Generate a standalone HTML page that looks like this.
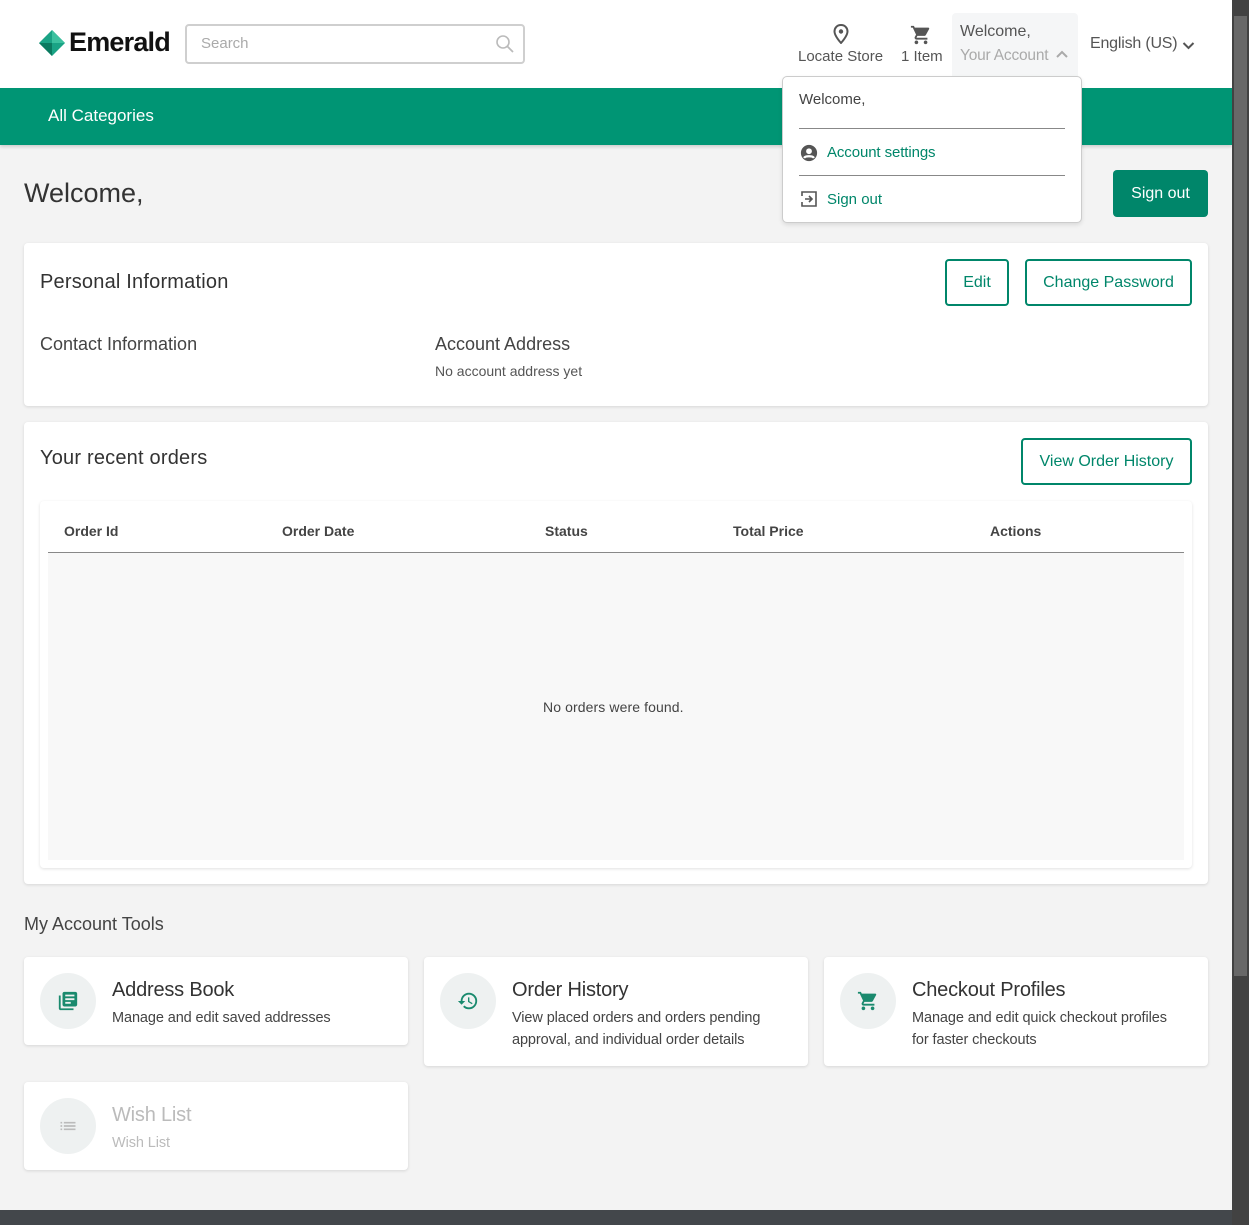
<!DOCTYPE html>
<html><head><style>
*{box-sizing:border-box;margin:0;padding:0}
body{width:1249px;height:1225px;overflow:hidden;background:#f3f3f3;font-family:"Liberation Sans",Arial,sans-serif;color:#333;position:relative}
.hdr{position:absolute;left:0;top:0;width:1232px;height:88px;background:#fff}
.nav{position:absolute;left:0;top:88px;width:1232px;height:57px;background:#009574;box-shadow:0 2px 3px rgba(0,0,0,.15)}
.nav span{position:absolute;left:48px;top:18px;color:#fff;font-size:17px}
.card{position:absolute;background:#fff;border-radius:4px;box-shadow:0 1px 3px rgba(0,0,0,.12)}
.btn{position:absolute;border:2px solid #00866a;border-radius:4px;color:#00866a;font-size:16px;display:flex;align-items:center;justify-content:center;background:#fff}
.t{position:absolute;white-space:nowrap}
.circ{position:absolute;left:16px;top:16px;width:56px;height:56px;border-radius:50%;background:#eef1f1;display:flex;align-items:center;justify-content:center}
.tool h3{position:absolute;left:88px;top:22px;font-size:20px;font-weight:normal;color:#333;letter-spacing:-0.2px}
.tool p{position:absolute;left:88px;top:50px;font-size:14.5px;line-height:22px;color:#444;width:268px;letter-spacing:-0.1px}
</style></head><body>
<div class="hdr">
 <svg class="t" style="left:39px;top:30px" width="26" height="26" viewBox="0 0 26 26"><path d="M13 0L26 13L13 26L0 13Z" fill="#1aa385"/><path d="M13 0L26 13H13Z" fill="#3cc19f"/><path d="M0 13L13 26V13Z" fill="#0b7a60"/></svg>
 <div class="t" style="left:69px;top:27px;font-size:27px;color:#111;font-weight:bold;letter-spacing:-0.8px">Emerald</div>
 <div class="t" style="left:185px;top:24px;width:340px;height:40px;border:2px solid #cfcfcf;border-radius:4px"></div>
 <div class="t" style="left:201px;top:35px;font-size:15px;color:#aaa">Search</div>
 <svg class="t" style="left:495px;top:34px" width="20" height="20" viewBox="0 0 20 20"><circle cx="8" cy="8" r="6" fill="none" stroke="#bbb" stroke-width="1.6"/><path d="M12.5 12.5L18 18" stroke="#bbb" stroke-width="1.8"/></svg>
 <svg class="t" style="left:832px;top:24px" width="18" height="20" viewBox="0 0 18 20"><path d="M9 1C5 1 2.5 4 2.5 7.5C2.5 12 9 19 9 19S15.5 12 15.5 7.5C15.5 4 13 1 9 1Z" fill="none" stroke="#555" stroke-width="2"/><circle cx="9" cy="7.5" r="2.2" fill="#555"/></svg>
 <div class="t" style="left:798px;top:48px;font-size:15px;color:#555">Locate Store</div>
 <svg class="t" style="left:910px;top:24px" width="22" height="22" viewBox="0 0 24 24"><path fill="#555" d="M7 18c-1.1 0-2 .9-2 2s.9 2 2 2 2-.9 2-2-.9-2-2-2zM1 2v2h2l3.6 7.59-1.35 2.45c-.16.28-.25.61-.25.96 0 1.1.9 2 2 2h12v-2H7.42c-.14 0-.25-.11-.25-.25l.03-.12.9-1.63h7.45c.75 0 1.41-.41 1.75-1.03l3.58-6.49A1 1 0 0 0 20 4H5.21l-.94-2H1zm16 16c-1.1 0-2 .9-2 2s.9 2 2 2 2-.9 2-2-.9-2-2-2z"/></svg>
 <div class="t" style="left:901px;top:48px;font-size:15px;color:#555">1 Item</div>
 <div class="t" style="left:952px;top:13px;width:126px;height:63px;background:#f5f6f7;border-radius:4px 4px 0 0"></div>
 <div class="t" style="left:960px;top:23px;font-size:16px;color:#555">Welcome,</div>
 <div class="t" style="left:960px;top:47px;font-size:15.5px;color:#aaa;letter-spacing:-0.2px">Your Account</div>
 <svg class="t" style="left:1056px;top:50px" width="12" height="10" viewBox="0 0 12 10"><path d="M1 7L6 2L11 7" fill="none" stroke="#aaa" stroke-width="2"/></svg>
 <div class="t" style="left:1090px;top:35px;font-size:16px;color:#555;letter-spacing:-0.2px">English (US)</div>
 <svg class="t" style="left:1182px;top:40px" width="13" height="10" viewBox="0 0 12 10"><path d="M1 3L6 8L11 3" fill="none" stroke="#555" stroke-width="2"/></svg>
</div>
<div class="nav"><span>All Categories</span></div>

<div class="t" style="left:24px;top:178px;font-size:27px;color:#333">Welcome,</div>
<div class="t" style="left:1113px;top:170px;width:95px;height:47px;background:#00866a;border-radius:4px;color:#fff;font-size:16px;display:flex;align-items:center;justify-content:center">Sign out</div>

<div class="t" style="left:782px;top:76px;width:300px;height:147px;background:#fff;border:1px solid #ccc;border-radius:5px;box-shadow:0 2px 4px rgba(0,0,0,.1);z-index:5">
 <div class="t" style="left:16px;top:14px;font-size:15px;color:#444">Welcome,</div>
 <div class="t" style="left:16px;top:51px;width:266px;height:1px;background:#888"></div>
 <svg class="t" style="left:17px;top:67px" width="18" height="18" viewBox="0 0 20 20"><circle cx="10" cy="10" r="9" fill="#555"/><circle cx="10" cy="8" r="3.2" fill="#fff"/><path d="M4.5 15.5C6 13 14 13 15.5 15.5" stroke="#fff" stroke-width="2.5" fill="none"/></svg>
 <div class="t" style="left:44px;top:67px;font-size:15px;color:#00866a;letter-spacing:-0.1px">Account settings</div>
 <div class="t" style="left:16px;top:98px;width:266px;height:1px;background:#888"></div>
 <svg class="t" style="left:17px;top:113px" width="18" height="18" viewBox="0 0 18 18"><path d="M2 6V2H16V16H2V12" fill="none" stroke="#555" stroke-width="1.6"/><path d="M5 9H12M9 6L12 9L9 12" fill="none" stroke="#555" stroke-width="1.6"/></svg>
 <div class="t" style="left:44px;top:114px;font-size:15px;color:#00866a">Sign out</div>
</div>

<div class="card" style="left:24px;top:243px;width:1184px;height:163px">
 <div class="t" style="left:16px;top:28px;font-size:20px;letter-spacing:0.2px">Personal Information</div>
 <div class="btn" style="left:921px;top:16px;width:64px;height:47px">Edit</div>
 <div class="btn" style="left:1001px;top:16px;width:167px;height:47px">Change Password</div>
 <div class="t" style="left:16px;top:91px;font-size:18px;color:#444">Contact Information</div>
 <div class="t" style="left:411px;top:91px;font-size:18px;color:#444">Account Address</div>
 <div class="t" style="left:411px;top:120px;font-size:14px;color:#555">No account address yet</div>
</div>

<div class="card" style="left:24px;top:422px;width:1184px;height:462px">
 <div class="t" style="left:16px;top:25px;font-size:20px;letter-spacing:0.2px">Your recent orders</div>
 <div class="btn" style="left:997px;top:16px;width:171px;height:47px">View Order History</div>
 <div class="card" style="left:16px;top:79px;width:1152px;height:367px">
  <div class="t" style="left:8px;top:52px;width:1136px;height:307px;background:#f8f8f8"></div>
  <div class="t" style="left:8px;top:51px;width:1136px;height:1px;background:#888"></div>
  <div class="t" style="left:24px;top:22px;font-size:14px;font-weight:bold;color:#444">Order Id</div>
  <div class="t" style="left:242px;top:22px;font-size:14px;font-weight:bold;color:#444">Order Date</div>
  <div class="t" style="left:505px;top:22px;font-size:14px;font-weight:bold;color:#444">Status</div>
  <div class="t" style="left:693px;top:22px;font-size:14px;font-weight:bold;color:#444">Total Price</div>
  <div class="t" style="left:950px;top:22px;font-size:14px;font-weight:bold;color:#444">Actions</div>
  <div class="t" style="left:503px;top:198px;font-size:14px;color:#444;letter-spacing:0.1px">No orders were found.</div>
 </div>
</div>

<div class="t" style="left:24px;top:914px;font-size:18px;color:#444">My Account Tools</div>

<div class="card tool" style="left:24px;top:957px;width:384px;height:88px">
 <div class="circ"><svg width="22" height="22" viewBox="0 0 24 24"><path fill="#1a8a6e" d="M4 6H2v14c0 1.1.9 2 2 2h14v-2H4V6zm16-4H8c-1.1 0-2 .9-2 2v12c0 1.1.9 2 2 2h12c1.1 0 2-.9 2-2V4c0-1.1-.9-2-2-2zm-1 9H9V9h10v2zm-4 4H9v-2h6v2zm4-8H9V5h10v2z"/></svg></div>
 <h3>Address Book</h3><p>Manage and edit saved addresses</p>
</div>
<div class="card tool" style="left:424px;top:957px;width:384px;height:109px">
 <div class="circ"><svg width="22" height="22" viewBox="0 0 24 24"><path fill="#1a8a6e" d="M13 3a9 9 0 0 0-9 9H1l3.89 3.89.07.14L9 12H6c0-3.870 3.13-7 7-7s7 3.13 7 7-3.13 7-7 7c-1.93 0-3.68-.79-4.94-2.06l-1.42 1.42A8.954 8.954 0 0 0 13 21a9 9 0 0 0 0-18zm-1 5v5l4.28 2.54.72-1.21-3.5-2.08V8H12z"/></svg></div>
 <h3>Order History</h3><p>View placed orders and orders pending approval, and individual order details</p>
</div>
<div class="card tool" style="left:824px;top:957px;width:384px;height:109px">
 <div class="circ"><svg width="22" height="22" viewBox="0 0 24 24"><path fill="#1a8a6e" d="M7 18c-1.1 0-2 .9-2 2s.9 2 2 2 2-.9 2-2-.9-2-2-2zM1 2v2h2l3.6 7.59-1.35 2.45c-.16.28-.25.61-.25.96 0 1.1.9 2 2 2h12v-2H7.42c-.14 0-.25-.11-.25-.25l.03-.12.9-1.63h7.45c.75 0 1.41-.41 1.75-1.03l3.58-6.49A1 1 0 0 0 20 4H5.21l-.94-2H1zm16 16c-1.1 0-2 .9-2 2s.9 2 2 2 2-.9 2-2-.9-2-2-2z"/></svg></div>
 <h3>Checkout Profiles</h3><p>Manage and edit quick checkout profiles for faster checkouts</p>
</div>
<div class="card tool" style="left:24px;top:1082px;width:384px;height:88px">
 <div class="circ"><svg width="20" height="20" viewBox="0 0 24 24"><path fill="#bbb" d="M3 13h2v-2H3v2zm0 4h2v-2H3v2zm0-8h2V7H3v2zm4 4h14v-2H7v2zm0 4h14v-2H7v2zM7 7v2h14V7H7z"/></svg></div>
 <h3 style="color:#bbb">Wish List</h3><p style="color:#bbb">Wish List</p>
</div>

<div class="t" style="left:0;top:1210px;width:1232px;height:15px;background:#43474b"></div>
<div class="t" style="left:1232px;top:0;width:17px;height:1225px;background:#424242"></div>
<div class="t" style="left:1234px;top:16px;width:13px;height:960px;background:#686868"></div>
</body></html>
